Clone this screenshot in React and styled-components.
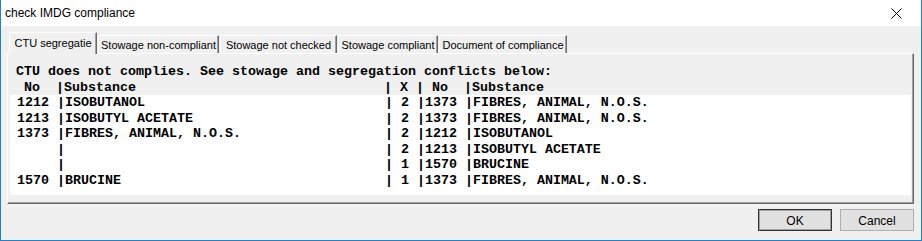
import React from 'react';
import styled, { createGlobalStyle } from 'styled-components';

const GlobalStyle = createGlobalStyle`
  html, body {
    margin: 0;
    padding: 0;
    background: #ffffff;
  }
  * {
    box-sizing: border-box;
  }
`;

const Window = styled.div`
  width: 922px;
  height: 241px;
  display: flex;
  flex-direction: column;
  border: 1px solid #1883d7;
  border-top: none;
  background: #f0f0f0;
  font-family: "Liberation Sans", Arial, sans-serif;
  color: #000;
`;

const TitleBar = styled.div`
  height: 26px;
  display: flex;
  align-items: center;
  justify-content: space-between;
  background: #ffffff;
  padding: 0 19px 0 4px;
`;

const Title = styled.span`
  font-size: 12px;
`;

const CloseButton = styled.span`
  width: 12px;
  height: 12px;
  display: flex;
  align-items: center;
  justify-content: center;
`;

const Body = styled.div`
  flex: 1;
  display: flex;
  flex-direction: column;
  padding: 6px 7px 0 6px;
`;

const TabStrip = styled.div`
  display: flex;
  align-items: flex-end;
  height: 21px;
  margin-left: 2px;
  position: relative;
  z-index: 1;
`;

const Tab = styled.div`
  width: ${p => p.$width}px;
  height: ${p => (p.$active ? 22 : 18)}px;
  margin-bottom: ${p => (p.$active ? -1 : 0)}px;
  margin-right: 1px;
  display: flex;
  align-items: center;
  justify-content: center;
  padding-bottom: ${p => (p.$active ? 1 : 0)}px;
  font-size: 11px;
  background: #f0f0f0;
  border-top: 1px solid #ffffff;
  border-left: 1px solid #ffffff;
  border-right: 1px solid #696969;
  box-shadow: inset -1px 0 0 #a0a0a0;
`;

const Panel = styled.div`
  height: 151px;
  display: flex;
  flex-direction: column;
  border-top: 1px solid #ffffff;
  border-left: 1px solid #ffffff;
  border-right: 1px solid #696969;
  border-bottom: 1px solid #696969;
  box-shadow: inset -1px -1px 0 #a0a0a0;
  padding: 10px 2px 0 2px;
`;

const Mono = styled.pre`
  margin: 0;
  font-family: "Liberation Mono", "DejaVu Sans Mono", monospace;
  font-weight: bold;
  font-size: 13.33px;
  line-height: 15.5px;
  white-space: pre;
`;

const Label = styled(Mono)`
  padding-left: 6px;
`;

const ResultBox = styled(Mono)`
  background: #ffffff;
  height: 100px;
  padding-left: 7px;
`;

const Footer = styled.div`
  display: flex;
  justify-content: flex-end;
  gap: 8px;
  padding-top: 5px;
`;

const Button = styled.div`
  width: 74px;
  height: 22px;
  display: flex;
  align-items: center;
  justify-content: center;
  font-size: 12px;
  padding-top: 1px;
  background: #e1e1e1;
  border: 1px solid ${p => (p.$default ? '#333333' : '#adadad')};
  box-shadow: ${p => (p.$default ? 'inset 0 0 0 1px #a0a0a0' : 'none')};
`;

const tabs = [
  { label: 'CTU segregatie', width: 88, active: true },
  { label: 'Stowage non-compliant', width: 121 },
  { label: 'Stowage not checked', width: 117 },
  { label: 'Stowage compliant', width: 100 },
  { label: 'Document of compliance', width: 128 },
];

const conflicts = [
  ['1212', 'ISOBUTANOL', '2', '1373', 'FIBRES, ANIMAL, N.O.S.'],
  ['1213', 'ISOBUTYL ACETATE', '2', '1373', 'FIBRES, ANIMAL, N.O.S.'],
  ['1373', 'FIBRES, ANIMAL, N.O.S.', '2', '1212', 'ISOBUTANOL'],
  ['', '', '2', '1213', 'ISOBUTYL ACETATE'],
  ['', '', '1', '1570', 'BRUCINE'],
  ['1570', 'BRUCINE', '1', '1373', 'FIBRES, ANIMAL, N.O.S.'],
];

const formatRow = ([no, sub, x, no2, sub2]) =>
  `${no.padEnd(4)} |${sub.padEnd(40)}| ${x} |${no2.padEnd(4)} |${sub2}`;

const header = ` No  |${'Substance'.padEnd(40)}| X | No  |Substance`;

const App = () => {
  return (
    <>
      <GlobalStyle />
      <Window>
        <TitleBar>
          <Title>check IMDG compliance</Title>
          <CloseButton>
            <svg width="11" height="11" viewBox="0 0 11 11">
              <path d="M0.5 0.5 L10.5 10.5 M10.5 0.5 L0.5 10.5" stroke="#000" strokeWidth="1" />
            </svg>
          </CloseButton>
        </TitleBar>
        <Body>
          <TabStrip>
            {tabs.map(t => (
              <Tab key={t.label} $width={t.width} $active={t.active}>
                {t.label}
              </Tab>
            ))}
          </TabStrip>
          <Panel>
            <Label>
              {'CTU does not complies. See stowage and segregation conflicts below:\n' + header}
            </Label>
            <ResultBox>{conflicts.map(formatRow).join('\n')}</ResultBox>
          </Panel>
          <Footer>
            <Button $default>OK</Button>
            <Button>Cancel</Button>
          </Footer>
        </Body>
      </Window>
    </>
  );
};

export default App;
